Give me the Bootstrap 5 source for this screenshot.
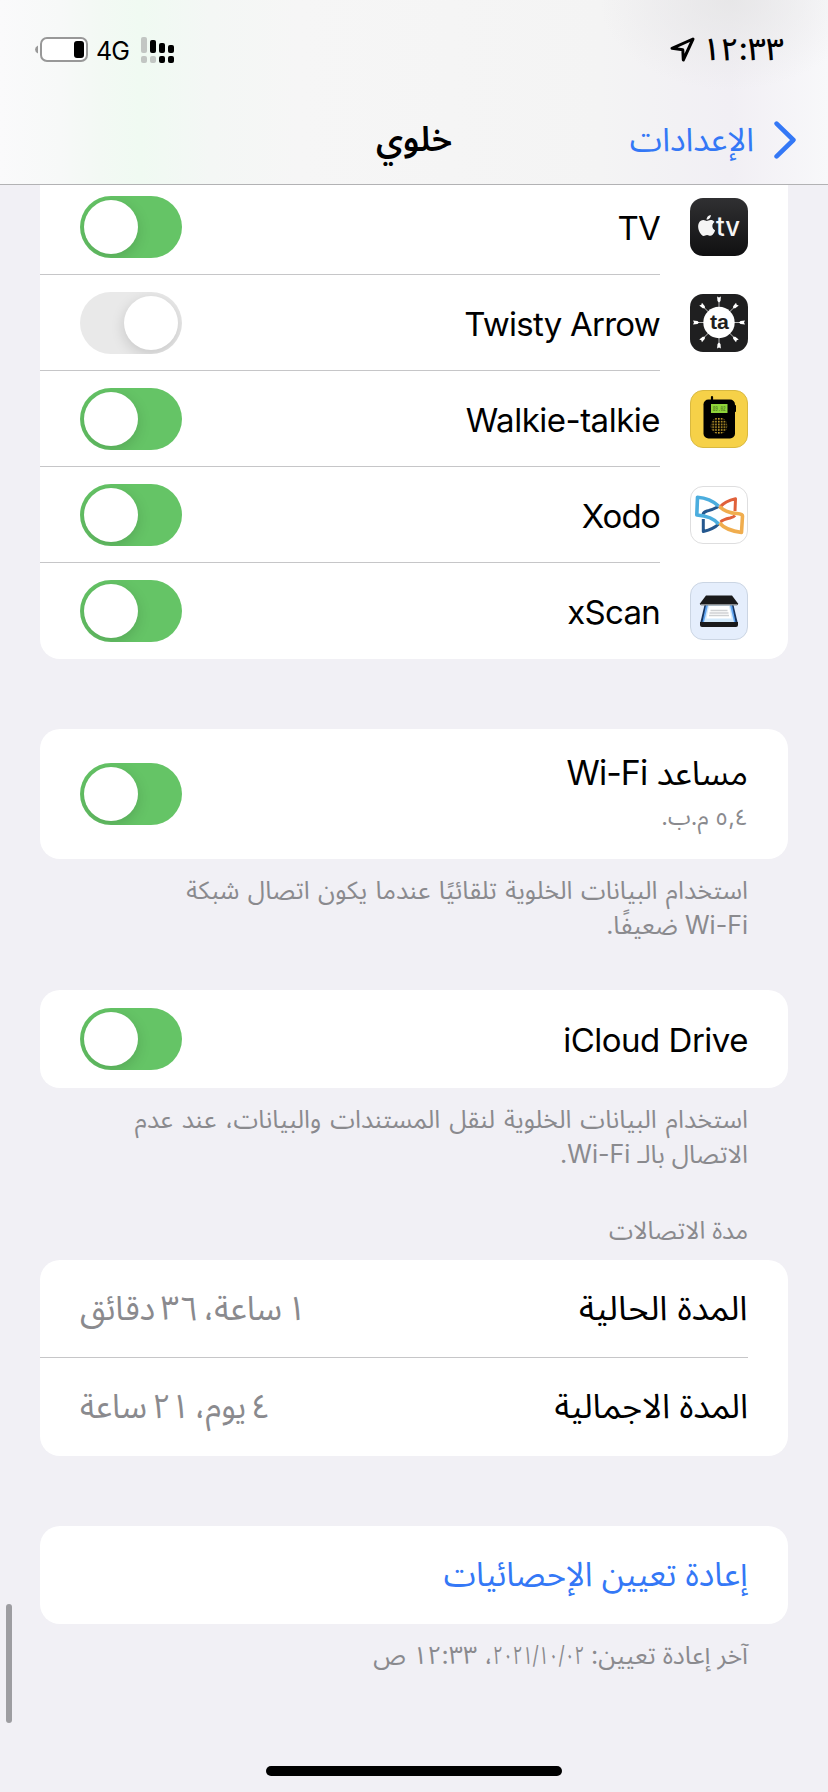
<!DOCTYPE html>
<html lang="ar" dir="rtl">
<head>
<meta charset="utf-8">
<meta name="viewport" content="width=device-width, initial-scale=1">
<title>خلوي</title>
<link href="https://cdn.jsdelivr.net/npm/bootstrap@5.3.0/dist/css/bootstrap.min.css" rel="stylesheet">
<script src="https://cdn.jsdelivr.net/npm/bootstrap@5.3.0/dist/js/bootstrap.bundle.min.js"></script>
<style>
body{background:#f1f0f5;font-family:Inter,"Noto Sans Arabic","DejaVu Sans",sans-serif;color:#000;height:1792px;overflow:hidden}
.topbar{height:185px;background:radial-gradient(ellipse 130px 90px at 730px 0,rgba(228,228,228,.75),rgba(228,228,228,0)),linear-gradient(90deg,#fafafb 0,#f7f9f8 60px,#f3f9f4 100px,#f0faf2 140px,#f4f7f5 210px,#f6f6f6 300px,#f4f4f4 600px,#f1eff4 730px,#f8f8fa 828px);border-bottom:1px solid #b2b2b4;z-index:5}
.status{height:99px;padding:0 44px 0 35px}
.time{font-size:31.5px;line-height:40px;font-weight:500;margin-top:-2px;margin-left:7px}
.net{font-size:25px;line-height:30px;letter-spacing:-.8px;margin:3px 12px 0 8px}
.title-bar{display:grid;grid-template-columns:1fr auto 1fr;height:82px;padding:0 32px}
.title-bar .t{padding-bottom:3px}
.blue{color:#3478f6}
.t{font-size:34px;line-height:42px;white-space:nowrap}
.lat{font-size:33px;letter-spacing:-.75px;padding-top:2px}
.wide{letter-spacing:-.5px}
.back{font-size:32.7px;margin-right:20px}
.squeeze{display:inline-block;transform:scaleX(var(--k));transform-origin:right center}
.val{word-spacing:-4px;transform-origin:left center}
.up{margin-top:-2px}
.assist-name{font-size:33.8px;letter-spacing:-.9px}
.group{margin:0 40px 70px;background:#fff;border-radius:20px;overflow:hidden}
.group.first{margin-top:-6px;border-radius:0 0 20px 20px}
.item{height:96px;padding:0 40px;position:relative}
.item.tall{height:98px}
.item.assist{height:130px}
.item+.item::before{content:"";position:absolute;top:-1px;left:0;right:128px;height:1px;background:#c6c6c8}
.item.tall+.item.tall::before{right:40px}
.app{width:58px;height:58px;margin-left:30px;flex:none}
.sw.form-check-input{width:102px;height:62px;border:0;border-radius:31px;background:#e9e9e9;margin:0;position:relative;overflow:hidden;flex:none}
.sw.form-check-input:checked{background:#65c466}
.sw::before{content:"";position:absolute;width:54px;height:54px;border-radius:50%;background:#fff;top:4px;right:4px;box-shadow:0 4px 14px rgba(0,0,0,.15)}
.sw:checked::before{right:auto;left:4px}
.note{font-size:25px;line-height:35px;color:#8a8a8e;padding:0 80px;margin:-56px 0 47px;white-space:nowrap}
.note.before-head{margin-bottom:41px}
.note.head{font-size:24.5px;margin:0 0 12px}
.ws1{word-spacing:1.4px}
.ws2{word-spacing:2px}
.date{margin-left:-41px}
.sub{font-size:23px;line-height:30px;color:#8a8a8e;margin-top:8px}
.muted{color:#8a8a8e}
.scroller{position:fixed;left:6px;top:1604px;width:6px;height:119px;border-radius:3px;background:#9d9da1}
.home{position:fixed;left:266px;top:1766px;width:296px;height:10px;border-radius:5px;background:#000}
</style>
</head>
<body>
<header class="topbar position-relative">
  <div class="status d-flex align-items-center">
    <span class="time">١٢:٣٣</span>
    <svg width="25" height="25" viewBox="0 0 25 25" fill="none" stroke="#000" stroke-width="3" stroke-linejoin="round"><path d="M23 2 2 11.300 12.800 12.700 13.300 23Z"/></svg>
    <svg class="me-auto" width="33" height="26" viewBox="0 0 33 26"><g fill="#c2c6c3"><rect width="6" height="16" rx="2"/><rect y="19" width="6" height="7" rx="2"/><rect x="9" y="19" width="6" height="7" rx="2"/></g><rect x="9" y="3" width="6" height="13" rx="2"/><rect x="18" y="6" width="6" height="10" rx="2"/><rect x="27" y="8" width="6" height="8" rx="2"/><rect x="18" y="19" width="6" height="7" rx="2"/><rect x="27" y="19" width="6" height="7" rx="2"/></svg>
    <span class="net">4G</span>
    <svg width="53" height="25" viewBox="0 0 53 25"><rect x="6" y="1" width="46" height="23" rx="6" fill="#fff" stroke="#989898" stroke-width="2"/><path d="M3 8.500Q0 10 0 12.500T3 16.500Z" fill="#989898"/><rect x="39" y="4" width="10" height="17" rx="3"/></svg>
  </div>
  <nav class="title-bar align-items-center">
    <div class="d-flex align-items-center">
      <svg width="22" height="38" viewBox="0 0 22 38" fill="none" stroke="#3478f6" stroke-width="4.600" stroke-linecap="round" stroke-linejoin="round"><path d="M2.600 2.600 19.400 19 2.600 35.400"/></svg>
      <span class="t blue back">الإعدادات</span>
    </div>
    <span class="t fw-semibold">خلوي</span>
  </nav>
</header>

<section class="group first">
  <div class="item d-flex align-items-center">
    <svg class="app" viewBox="0 0 58 58"><defs><linearGradient id="tvbg" x1="0" x2="0" y1="0" y2="1"><stop stop-color="#303032"/><stop offset="1" stop-color="#101011"/></linearGradient></defs><rect width="58" height="58" rx="13" fill="url(#tvbg)"/><path transform="translate(6.200 17) scale(.87)" fill="#f5f5f5" d="M12.152 6.896c-.948 0-2.415-1.078-3.960-1.040-2.040.027-3.910 1.183-4.961 3.014-2.117 3.675-.546 9.103 1.519 12.090 1.013 1.454 2.208 3.090 3.792 3.039 1.520-.065 2.090-.987 3.935-.987 1.831 0 2.350.987 3.960.948 1.637-.026 2.676-1.480 3.676-2.948 1.156-1.688 1.636-3.325 1.662-3.415-.039-.013-3.182-1.221-3.220-4.857-.026-3.040 2.480-4.494 2.597-4.559-1.429-2.090-3.623-2.324-4.390-2.376-2-.156-3.675 1.090-4.610 1.090zM15.530 3.830c.843-1.012 1.400-2.427 1.245-3.830-1.207.052-2.662.805-3.532 1.818-.780.896-1.454 2.338-1.273 3.714 1.338.104 2.715-.688 3.559-1.701"/><text direction="ltr" x="26" y="38" font-size="26.500" font-weight="500" fill="#f5f5f5" textLength="24" lengthAdjust="spacingAndGlyphs">tv</text></svg>
    <span class="t lat">TV</span>
    <input class="form-check-input sw me-auto" type="checkbox" role="switch" aria-label="TV" checked>
  </div>
  <div class="item d-flex align-items-center">
    <svg class="app" viewBox="0 0 58 58"><defs><g id="dart"><path d="M0-15V-23" stroke="#ddd" stroke-width=".8"/><path d="M-1.900-26 0-25 1.900-26 1.500-21.500 0-20-1.500-21.500Z" fill="#fff"/></g></defs><rect width="58" height="58" rx="13" fill="#1f1f20"/><g transform="translate(29 28.500)"><use href="#dart"/><use href="#dart" transform="rotate(45)"/><use href="#dart" transform="rotate(90)"/><use href="#dart" transform="rotate(135)"/><use href="#dart" transform="rotate(180)"/><use href="#dart" transform="rotate(225)"/><use href="#dart" transform="rotate(270)"/><use href="#dart" transform="rotate(315)"/><circle r="15.700" fill="#fff"/></g><text direction="ltr" x="20" y="34.500" font-family="Liberation Sans,sans-serif" font-size="21" font-weight="700" fill="#1f1f20" textLength="19" lengthAdjust="spacingAndGlyphs">ta</text></svg>
    <span class="t lat">Twisty Arrow</span>
    <input class="form-check-input sw me-auto" type="checkbox" role="switch" aria-label="Twisty Arrow">
  </div>
  <div class="item d-flex align-items-center">
    <svg class="app" viewBox="0 0 58 58"><defs><pattern id="dots" width="2.800" height="2.800" patternUnits="userSpaceOnUse"><rect width="1.600" height="1.600" fill="#c9a22e"/></pattern></defs><rect x=".5" y=".5" width="57" height="57" rx="12.500" fill="#f6d148" stroke="#d9b940"/><path d="M22 7V12" stroke="#000" stroke-width="2.200" stroke-linecap="round"/><rect x="44" y="15" width="2" height="7" rx=".8"/><rect x="13.500" y="9.500" width="31.500" height="39" rx="5"/><rect x="21" y="14" width="16.500" height="9" fill="#8fd43a"/><text direction="ltr" x="22.700" y="21" font-family="Liberation Mono,monospace" font-size="6.500" font-weight="700" fill="#5a8a24" textLength="13" lengthAdjust="spacingAndGlyphs">89.02</text><circle cx="29" cy="35.700" r="8.400" fill="url(#dots)"/></svg>
    <span class="t lat wide">Walkie-talkie</span>
    <input class="form-check-input sw me-auto" type="checkbox" role="switch" aria-label="Walkie-talkie" checked>
  </div>
  <div class="item d-flex align-items-center">
    <svg class="app" viewBox="0 0 58 58" fill="none" stroke-linejoin="round"><rect x=".5" y=".5" width="57" height="57" rx="12.500" fill="#fff" stroke="#dededf"/><g stroke-width="3"><path stroke="#25588f" d="M28.500 20.500Q22 24 17 25Q13.500 26 13 28.500M13.300 33V45.500Q24 43 28.500 38"/><path stroke="#e0603a" d="M30 21Q35 15 45.500 12.700L45 25M30.500 36Q33 33.500 40 32Q44 31 45 29.500"/></g><g stroke-width="3.600"><path stroke="#f0ad4e" d="M29.500 20.500Q36 27 47 27.500Q52.500 27.800 52.500 30L51.500 46.500Q36 44.500 29.500 37"/><path stroke="#4badde" d="M28.500 20Q20 12 7.500 11.200L6.800 29Q22 30 28.500 38"/></g></svg>
    <span class="t lat">Xodo</span>
    <input class="form-check-input sw me-auto" type="checkbox" role="switch" aria-label="Xodo" checked>
  </div>
  <div class="item d-flex align-items-center">
    <svg class="app" viewBox="0 0 58 58"><rect x=".5" y=".5" width="57" height="57" rx="12.500" fill="#e5eefc" stroke="#cbd5e3"/><path fill="#16345f" d="M14.500 23H43.500L48 42H10Z"/><path fill="#5fa4f2" d="M16 23H42L45.500 40H12.500Z"/><path fill="#d3e9fa" d="M18 23H40L44 40H14Z"/><path fill="#fff" d="M19 24H39L41.500 36.500H16.500Z"/><path stroke="#cfd1d3" stroke-width="1.400" d="M20.500 28.500H37.500M19.500 31H38.500M19 33.500H39"/><path fill="#1a1a1b" d="M16 13.500H42L48 21.500V23H10V21.500Z"/><path fill="#86898c" d="M10 22H48L47 23.500H11Z"/><path fill="#1a1a1b" d="M10 40H48V43Q48 45 46 45H12Q10 45 10 43Z"/></svg>
    <span class="t lat">xScan</span>
    <input class="form-check-input sw me-auto" type="checkbox" role="switch" aria-label="xScan" checked>
  </div>
</section>

<section class="group">
  <div class="item assist d-flex align-items-center">
    <div class="d-flex flex-column mb-1"><span class="t assist-name">مساعد Wi-Fi</span><span class="sub">٥,٤ م.ب.</span></div>
    <input class="form-check-input sw me-auto" type="checkbox" role="switch" aria-label="مساعد Wi-Fi" checked>
  </div>
</section>
<p class="note"><span class="ws1">استخدام البيانات الخلوية تلقائيًا عندما يكون اتصال شبكة</span><br>Wi-Fi ضعيفًا.</p>

<section class="group">
  <div class="item tall d-flex align-items-center"><span class="t lat wide">iCloud Drive</span>
    <input class="form-check-input sw me-auto" type="checkbox" role="switch" aria-label="iCloud Drive" checked></div>
</section>
<p class="note before-head"><span class="ws2">استخدام البيانات الخلوية لنقل المستندات والبيانات، عند عدم</span><br>الاتصال بالـ Wi-Fi.</p>

<h2 class="note head fw-normal">مدة الاتصالات</h2>
<section class="group">
  <div class="item tall d-flex align-items-center"><span class="t up squeeze" style="--k:1.025">المدة الحالية</span><span class="t val up muted me-auto squeeze" style="--k:.965;transform-origin:left center">١ ساعة، ٣٦ دقائق</span></div>
  <div class="item tall d-flex align-items-center"><span class="t up">المدة الاجمالية</span><span class="t val up muted me-auto squeeze" style="--k:.955;transform-origin:left center">٤ يوم، ٢١ ساعة</span></div>
</section>

<section class="group">
  <div class="item tall d-flex align-items-center"><a href="#" class="t blue up squeeze text-decoration-none" style="--k:.957">إعادة تعيين الإحصائيات</a></div>
</section>
<p class="note">آخر إعادة تعيين: <span class="date squeeze" style="--k:.69">٢٠٢١/١٠/٠٢</span>، ١٢:٣٣ ص</p>

<div class="scroller"></div>
<div class="home"></div>
</body>
</html>
